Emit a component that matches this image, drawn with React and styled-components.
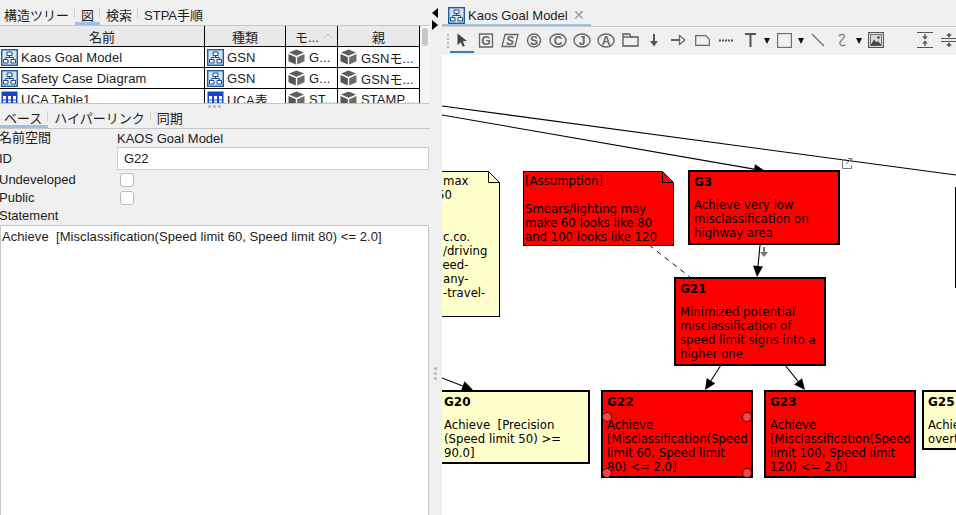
import React from 'react';
import styled, { createGlobalStyle } from 'styled-components';

const GlobalStyle = createGlobalStyle`
  html, body {
    margin: 0;
    padding: 0;
    height: 100%;
    overflow: hidden;
    background: #f0f0f0;
  }
  #root { height: 100%; }
`;

const UI_FONT = `"Liberation Sans", "Noto Sans CJK JP", sans-serif`;
const NODE_FONT = `"DejaVu Sans", "Noto Sans CJK JP", sans-serif`;

// the canvas starts here in page coordinates
const CANVAS_X = 442;
const CANVAS_Y = 55;

const Page = styled.div`
  display: flex;
  width: 956px;
  height: 515px;
  overflow: hidden;
  font-family: ${UI_FONT};
  font-size: 13px;
  color: #1c1c1c;
`;

const LeftPane = styled.div`
  display: flex;
  flex-direction: column;
  width: 430px;
  flex: none;
`;

const Divider = styled.div`
  width: 12px;
  flex: none;
  display: flex;
  flex-direction: column;
  padding-top: 8px;
  padding-left: 2px;
  box-sizing: border-box;
`;

const Triangle = styled.div`
  width: 0;
  height: 0;
  margin-bottom: 2px;
  border-top: 5px solid transparent;
  border-bottom: 5px solid transparent;
  border-left: ${(p) => (p.$dir === 'right' ? '6px solid #000' : 'none')};
  border-right: ${(p) => (p.$dir === 'left' ? '6px solid #000' : 'none')};
`;

const GripDots = styled.div`
  display: flex;
  flex-direction: column;
  gap: 2px;
  margin-top: 335px;
  margin-left: 2px;
  span {
    width: 3px;
    height: 3px;
    border-radius: 50%;
    background: #b4b4b4;
  }
`;

const RightPane = styled.div`
  flex: 1;
  min-width: 0;
  display: flex;
  flex-direction: column;
`;

const TabBar = styled.div`
  display: flex;
  height: 25px;
  flex: none;
  box-sizing: border-box;
  border-bottom: ${(p) => (p.$line ? '1px solid #c8c8c8' : 'none')};
`;

const Tab = styled.div`
  display: flex;
  align-items: center;
  padding: 6px 6px 0 ${(p) => (p.$first ? 4 : 6)}px;
  height: 100%;
  box-sizing: border-box;
  white-space: nowrap;
  position: relative;
  border-bottom: 3px solid ${(p) => (p.$active ? '#9fc0e4' : 'transparent')};
  &::after {
    content: '';
    position: absolute;
    right: 0;
    top: 7px;
    bottom: 4px;
    width: 1px;
    background: ${(p) => (p.$last ? 'transparent' : '#cfcfcf')};
  }
`;

const TableWrapper = styled.div`
  display: flex;
  height: 79px;
  width: 429px;
  flex: none;
  overflow: hidden;
  background: #f0f0f0;
  border-top: 1px solid #c4c4c4;
  border-bottom: 1px solid #c4c4c4;
  box-sizing: border-box;
`;

const ListTable = styled.table`
  width: 420px;
  flex: none;
  table-layout: fixed;
  border-collapse: separate;
  border-spacing: 0;
  background: #fff;
  align-self: flex-start;
  th {
    height: 21px;
    padding: 0;
    font-weight: 400;
    background: #e9e9e9;
    border-bottom: 1px solid #000;
    border-right: 1px solid #000;
    text-align: center;
    box-sizing: border-box;
  }
  td {
    height: 21px;
    padding: 0;
    background: #fff;
    border-bottom: 1px solid #000;
    border-right: 1px solid #000;
    box-sizing: border-box;
  }
`;

const HeaderInner = styled.div`
  display: flex;
  align-items: center;
  justify-content: space-between;
  padding: 0 4px 0 9px;
`;

const Cell = styled.div`
  display: flex;
  align-items: center;
  gap: ${(p) => p.$gap || 3}px;
  padding-left: ${(p) => p.$pad || 1}px;
  white-space: nowrap;
  overflow: hidden;
  letter-spacing: 0.1px;
`;

const ScrollTrack = styled.div`
  flex: 1;
  background: #f5f5f5;
  display: flex;
  justify-content: center;
  padding-top: 2px;
`;

const ScrollThumb = styled.div`
  width: 6px;
  height: 18px;
  border-radius: 3px;
  background: #c6c6c6;
`;

const SashDots = styled.div`
  height: 0;
  display: flex;
  justify-content: center;
  gap: 2px;
  width: 429px;
  position: relative;
  top: 1px;
  span {
    width: 3px;
    height: 3px;
    border-radius: 50%;
    background: #b4b4b4;
  }
`;

const Form = styled.div`
  display: grid;
  grid-template-columns: 117px 1fr;
  grid-template-rows: 18px 23px 19px 18px 18px;
  width: 429px;
  flex: none;
  align-items: center;
`;

const Label = styled.div`
  margin-left: -1px;
  line-height: 14px;
  white-space: nowrap;
  grid-column: ${(p) => (p.$wide ? '1 / -1' : 'auto')};
`;

const FieldText = styled.div`
  white-space: nowrap;
`;

const TextField = styled.div`
  height: 23px;
  box-sizing: border-box;
  background: #fff;
  border: 1px solid #cdcdcd;
  padding-left: 6px;
  display: flex;
  align-items: center;
`;

const Checkbox = styled.div`
  width: 14px;
  height: 14px;
  margin-left: 3px;
  box-sizing: border-box;
  background: #fff;
  border: 1px solid #b9b9b9;
  border-radius: 3px;
`;

const Statement = styled.div`
  flex: 1;
  width: 429px;
  box-sizing: border-box;
  background: #fff;
  border: 1px solid #c8c8c8;
  border-bottom: none;
  padding: 3px 1px;
  white-space: pre;
  letter-spacing: 0.06px;
`;

const EditorTabRow = styled.div`
  display: flex;
  height: 27px;
  flex: none;
  box-sizing: border-box;
  border-bottom: 1px solid #c8c8c8;
`;

const EditorTab = styled.div`
  display: flex;
  align-items: center;
  gap: 3px;
  width: 149px;
  height: 26px;
  box-sizing: border-box;
  padding: 6px 0 0 6px;
  border-bottom: 2px solid #9fc0e4;
  white-space: nowrap;
`;

const CloseMark = styled.span`
  color: #9a9a9a;
  font-size: 14px;
  margin-left: 2px;
`;

const Toolbar = styled.div`
  display: flex;
  height: 28px;
  flex: none;
  box-sizing: border-box;
  padding-left: 8px;
  overflow: hidden;
  position: relative;
`;

const ToolGrip = styled.div`
  position: absolute;
  left: 5px;
  top: 7px;
  bottom: 5px;
  width: 2px;
  background: repeating-linear-gradient(to bottom, #bbb 0 2px, transparent 2px 4px);
`;

const Tool = styled.div`
  width: 24px;
  height: 26px;
  flex: none;
  box-sizing: border-box;
  display: flex;
  align-items: center;
  justify-content: center;
  padding-top: 2px;
  border-bottom: 2px solid ${(p) => (p.$active ? '#3b7bbf' : 'transparent')};
  margin-right: ${(p) => p.$after || 0}px;
`;

const ToolCaret = styled.div`
  width: 10px;
  height: 26px;
  flex: none;
  display: flex;
  justify-content: center;
  padding-top: 11px;
  box-sizing: border-box;
  &::before {
    content: '';
    width: 0;
    height: 0;
    border-left: 3.5px solid transparent;
    border-right: 3.5px solid transparent;
    border-top: 6px solid #111;
  }
`;

const Canvas = styled.div`
  flex: 1;
  position: relative;
  overflow: hidden;
  background: #fff;
`;

const Wires = styled.svg`
  position: absolute;
  left: 0;
  top: 0;
  width: 514px;
  height: 460px;
`;

const Node = styled.div`
  position: absolute;
  left: ${(p) => p.$x - CANVAS_X}px;
  top: ${(p) => p.$y - CANVAS_Y}px;
  width: ${(p) => p.$w}px;
  height: ${(p) => p.$h}px;
  box-sizing: border-box;
  background: ${(p) => (p.$red ? '#ff0000' : '#ffffcc')};
  border: ${(p) => (p.$thin ? 1 : 2)}px solid #000;
  padding: ${(p) => (p.$thin ? '2px 1px' : '3px 4px')};
  font-family: ${NODE_FONT};
  font-size: 11.7px;
  line-height: 14px;
  color: #000;
  white-space: pre;
`;

const NodeTitle = styled.div`
  font-size: 12px;
  font-weight: 700;
  margin-bottom: 9px;
`;

const NodeLine = styled.div`
  min-height: 14px;
  margin-left: ${(p) => p.$indent || 0}px;
`;

const Fold = styled.svg`
  position: absolute;
  top: -1px;
  right: -1px;
  width: 12px;
  height: 12px;
`;

const Handle = styled.div`
  position: absolute;
  width: 10px;
  height: 10px;
  box-sizing: border-box;
  border-radius: 50%;
  background: #f04848;
  border: 1px solid #4a1010;
  left: ${(p) => (p.$right ? 139 : -1)}px;
  top: ${(p) => (p.$bottom ? 76 : 20)}px;
`;

const Ink = styled.g`
  fill: none;
  stroke: #555;
  stroke-width: 1.3;
`;

function DiagramIcon() {
  return (
    <svg width="17" height="17" viewBox="0 0 17 17">
      <rect x="0.7" y="0.7" width="15.6" height="15.6" fill="#d3e3f3" stroke="#1f5c9c" strokeWidth="1.4" />
      <path d="M6 3h5v3.5H6zM2.5 10.5h4.5V14H2.5zM10 10.5h4.5V14H10zM8.500 6.500v2M4.700 10.500v-2h7.600v2" fill="#f4f8fc" stroke="#1d4f86" />
    </svg>
  );
}

function TableIcon() {
  return (
    <svg width="17" height="17" viewBox="0 0 17 17">
      <rect x="0.5" y="0.5" width="16" height="16" fill="#1746c4" />
      <path d="M2 5h3v10H2zM7 5h3v10H7zM12 5h3v10h-3z" fill="#fff" />
      <path d="M2 9h3M7 9h3M12 9h3M2 12h3M7 12h3M12 12h3" stroke="#1746c4" />
    </svg>
  );
}

function CubeIcon() {
  return (
    <svg width="17" height="16" viewBox="0 0 17 16">
      <path d="M8.500 0.500 16 3.600 8.500 6.800 1 3.600z" fill="#5e5e5e" />
      <path d="M0.500 5 7.800 8.200V15.500L0.500 12.300z" fill="#565656" />
      <path d="M16.500 5 9.200 8.200V15.500L16.500 12.300z" fill="#6c6c6c" />
    </svg>
  );
}

function GlyphBox({ letter, slanted }) {
  return (
    <svg width="18" height="15" viewBox="0 0 18 15">
      <path d={slanted ? 'M4 1.500h13l-3 12H1z' : 'M2.500 1h13v13h-13z'} fill="none" stroke="#666" strokeWidth="1.3" />
      <text x="9" y="12" fontSize="12" fontWeight="700" textAnchor="middle" fill="#666" fontFamily="Liberation Sans" fontStyle={slanted ? 'italic' : 'normal'}>{letter}</text>
    </svg>
  );
}

function GlyphRound({ letter, wide }) {
  const rx = wide ? 8 : 6.5;
  return (
    <svg width="18" height="15" viewBox="0 0 18 15">
      <ellipse cx="9" cy="7.500" rx={rx} ry="6.500" fill="none" stroke="#666" strokeWidth="1.4" />
      <text x="9" y="12" fontSize="12" fontWeight="700" textAnchor="middle" fill="#666" fontFamily="Liberation Sans">{letter}</text>
    </svg>
  );
}

const toolIcons = {
  pointer: (
    <svg width="12" height="14" viewBox="0 0 12 14"><path d="M1.500 0.500 11 8 6.800 8.200 8.800 13 6.600 13.600 4.800 9.200 1.500 12z" fill="#444" /></svg>
  ),
  folder: (
    <svg width="17" height="14" viewBox="0 0 17 14"><Ink><path d="M1 13V1h6.500l1.500 3h7v9z" /><path d="M1 4h8" /></Ink></svg>
  ),
  down: (
    <svg width="10" height="13" viewBox="0 0 10 13"><path d="M5 0v11" stroke="#555" strokeWidth="2" /><path d="M1 7h8l-4 5.500z" fill="#555" /></svg>
  ),
  right: (
    <svg width="15" height="12" viewBox="0 0 15 12"><path d="M0 6h9" stroke="#666" strokeWidth="2" /><path d="M8.500 1.500 14 6l-5.500 4.500z" fill="none" stroke="#666" strokeWidth="1.2" /></svg>
  ),
  note: (
    <svg width="15" height="11" viewBox="0 0 15 11"><path d="M0.700 0.700h10l3.600 3.600v6H0.700z" fill="none" stroke="#666" strokeWidth="1.2" /></svg>
  ),
  dots: (
    <svg width="15" height="3" viewBox="0 0 15 3"><path d="M0 1.500h15" stroke="#555" strokeWidth="2" strokeDasharray="2 1" /></svg>
  ),
  text: (
    <svg width="11" height="14" viewBox="0 0 11 14"><path d="M0 1h11M5.500 1v13" stroke="#555" strokeWidth="2" fill="none" /></svg>
  ),
  rect: (
    <svg width="15" height="15" viewBox="0 0 15 15"><rect x="0.600" y="0.600" width="13.800" height="13.800" fill="none" stroke="#666" strokeWidth="1.1" /></svg>
  ),
  line: (
    <svg width="14" height="14" viewBox="0 0 14 14"><path d="M1 1l12 12" stroke="#666" strokeWidth="1.1" /></svg>
  ),
  squiggle: (
    <svg width="10" height="14" viewBox="0 0 10 14"><path d="M2 3.200C3 0.800 7.500 0.600 7.500 3.200 7.500 6 2.800 7 2.800 10 2.800 13 6.500 13.400 8.600 11.600" fill="none" stroke="#777" strokeWidth="1.2" /></svg>
  ),
  image: (
    <svg width="16" height="16" viewBox="0 0 16 16">
      <rect x="0.600" y="0.600" width="14.800" height="14.800" fill="#fff" stroke="#555" strokeWidth="1.2" />
      <rect x="2.500" y="2.500" width="11" height="11" fill="#d8d8d8" stroke="#555" strokeWidth="0.8" />
      <path d="M2.500 13.500 6 7.500l2.500 3 1.500-1.500 3.500 4.500z" fill="#444" />
      <circle cx="10.500" cy="5.500" r="1.300" fill="#444" />
    </svg>
  ),
  alignGrow: (
    <svg width="16" height="16" viewBox="0 0 16 16"><path d="M0 0.500h16M0 15.500h16" stroke="#555" /><path d="M8 2v3M8 11v3" stroke="#555" strokeWidth="1.5" /><path d="M5 4.500h6L8 7.500zM5 11.500h6L8 8.500z" fill="#555" /></svg>
  ),
  alignShrink: (
    <svg width="16" height="16" viewBox="0 0 16 16"><path d="M0 6.500h16M0 9.500h16" stroke="#555" /><path d="M8 1v2M8 13v2" stroke="#555" strokeWidth="1.5" /><path d="M5 2.500h6L8 5.500zM5 13.500h6L8 10.500z" fill="#555" /></svg>
  ),
};

const tools = [
  { icon: toolIcons.pointer, active: true },
  { icon: <GlyphBox letter="G" /> },
  { icon: <GlyphBox letter="S" slanted /> },
  { icon: <GlyphRound letter="S" /> },
  { icon: <GlyphRound letter="C" wide /> },
  { icon: <GlyphRound letter="J" wide /> },
  { icon: <GlyphRound letter="A" wide /> },
  { icon: toolIcons.folder },
  { icon: toolIcons.down },
  { icon: toolIcons.right },
  { icon: toolIcons.note },
  { icon: toolIcons.dots },
  { icon: toolIcons.text, caret: true },
  { icon: toolIcons.rect, caret: true },
  { icon: toolIcons.line },
  { icon: toolIcons.squiggle, caret: true },
  { icon: toolIcons.image, after: 25 },
  { icon: toolIcons.alignGrow },
  { icon: toolIcons.alignShrink },
];

const rows = [
  { name: 'Kaos Goal Model', icon: <DiagramIcon />, kind: 'GSN', model: 'G...', parent: 'GSNモ...' },
  { name: 'Safety Case Diagram', icon: <DiagramIcon />, kind: 'GSN', model: 'G...', parent: 'GSNモ...' },
  { name: 'UCA Table1', icon: <TableIcon />, kind: 'UCA表', model: 'ST...', parent: 'STAMP...' },
];

function Arrow({ x1, y1, x2, y2 }) {
  const len = Math.hypot(x2 - x1, y2 - y1);
  const ux = (x2 - x1) / len;
  const uy = (y2 - y1) / len;
  const bx = x2 - ux * 11;
  const by = y2 - uy * 11;
  const head = `${x2},${y2} ${bx - uy * 5},${by + ux * 5} ${bx + uy * 5},${by - ux * 5}`;
  return (
    <>
      <line x1={x1} y1={y1} x2={bx} y2={by} stroke="#000" strokeWidth="1.1" />
      <polygon points={head} fill="#000" />
    </>
  );
}

function FoldCorner({ fill }) {
  return (
    <Fold viewBox="0 0 12 12">
      <path d="M0 0H12V12z" fill="#fff" />
      <path d="M0.500 0.500V11.500H11.500z" fill={fill} stroke="#000" />
    </Fold>
  );
}

function GoalNode({ title, lines, children, ...rest }) {
  return (
    <Node {...rest}>
      <NodeTitle>{title}</NodeTitle>
      {lines.map((line, i) => (
        <NodeLine key={i}>{line}</NodeLine>
      ))}
      {children}
    </Node>
  );
}

const noteLines = [
  { text: 'max', indent: -1 },
  { text: '50', indent: -7 },
  { text: '' },
  { text: '' },
  { text: 'c.co.', indent: -1 },
  { text: '/driving', indent: -1 },
  { text: 'peed-', indent: -9 },
  { text: 'any-', indent: -1 },
  { text: '-travel-', indent: -1 },
];

export default function App() {
  return (
    <Page>
      <GlobalStyle />
      <LeftPane>
        <TabBar>
          <Tab $first>構造ツリー</Tab>
          <Tab $active>図</Tab>
          <Tab>検索</Tab>
          <Tab $last>STPA手順</Tab>
        </TabBar>
        <TableWrapper>
          <ListTable>
            <colgroup>
              <col style={{ width: 205 }} />
              <col style={{ width: 81 }} />
              <col style={{ width: 52 }} />
              <col style={{ width: 82 }} />
            </colgroup>
            <thead>
              <tr>
                <th>名前</th>
                <th>種類</th>
                <th>
                  <HeaderInner>
                    <span>モ...</span>
                    <svg width="10" height="6" viewBox="0 0 10 6">
                      <path d="M0.500 5.500 5 1l4.500 4.500" fill="none" stroke="#bbb" />
                    </svg>
                  </HeaderInner>
                </th>
                <th>親</th>
              </tr>
            </thead>
            <tbody>
              {rows.map((row) => (
                <tr key={row.name}>
                  <td><Cell>{row.icon}{row.name}</Cell></td>
                  <td><Cell $pad={2}>{row.icon}{row.kind}</Cell></td>
                  <td><Cell $pad={2} $gap={4}><CubeIcon />{row.model}</Cell></td>
                  <td><Cell $pad={2} $gap={4}><CubeIcon />{row.parent}</Cell></td>
                </tr>
              ))}
            </tbody>
          </ListTable>
          <ScrollTrack>
            <ScrollThumb />
          </ScrollTrack>
        </TableWrapper>
        <SashDots><span /><span /><span /></SashDots>
        <TabBar $line>
          <Tab $first $active>ベース</Tab>
          <Tab>ハイパーリンク</Tab>
          <Tab $last>同期</Tab>
        </TabBar>
        <Form>
          <Label>名前空間</Label>
          <FieldText>KAOS Goal Model</FieldText>
          <Label>ID</Label>
          <TextField>G22</TextField>
          <Label>Undeveloped</Label>
          <Checkbox />
          <Label>Public</Label>
          <Checkbox />
          <Label $wide>Statement</Label>
        </Form>
        <Statement>Achieve  [Misclassification(Speed limit 60, Speed limit 80) &lt;= 2.0]</Statement>
      </LeftPane>

      <Divider>
        <Triangle $dir="left" />
        <Triangle $dir="right" />
        <GripDots><span /><span /><span /></GripDots>
      </Divider>

      <RightPane>
        <EditorTabRow>
          <EditorTab>
            <DiagramIcon />
            Kaos Goal Model
            <CloseMark>✕</CloseMark>
          </EditorTab>
        </EditorTabRow>
        <Toolbar>
          <ToolGrip />
          {tools.map((tool, i) => (
            <React.Fragment key={i}>
              <Tool $active={tool.active} $after={tool.after}>{tool.icon}</Tool>
              {tool.caret && <ToolCaret />}
            </React.Fragment>
          ))}
        </Toolbar>
        <Canvas>
          <Wires viewBox={`${CANVAS_X} ${CANVAS_Y} 514 460`}>
            <line x1="442" y1="106" x2="956" y2="175" stroke="#000" strokeWidth="1.1" />
            <Arrow x1={442} y1={115} x2={765} y2={171} />
            <Arrow x1={760} y1={245} x2={757} y2={277} />
            <line x1="649" y1="245" x2="690" y2="277" stroke="#000" strokeDasharray="5 5" />
            <Arrow x1={721} y1={365} x2={705} y2={390} />
            <Arrow x1={785} y1={365} x2={805} y2={390} />
            <Arrow x1={442} y1={378} x2={473} y2={390} />
            <path d="M764 247v8" stroke="#777" strokeWidth="2" />
            <path d="M760 252h8l-4 5z" fill="#777" />
            <path d="M842.500 159.500v9h9v-3M846 159.500h-3.500M846 164l5-5M848 158.500h4v4" fill="none" stroke="#777" />
          </Wires>

          <Node $x={430} $y={171} $w={70} $h={146} $thin>
            {noteLines.map((line, i) => (
              <NodeLine key={i} $indent={12 + (line.indent || 0)}>{line.text}</NodeLine>
            ))}
            <FoldCorner fill="#ffffcc" />
          </Node>

          <Node $x={523} $y={171} $w={151} $h={75} $red $thin>
            <NodeLine>[Assumption]</NodeLine>
            <NodeLine />
            <NodeLine>Smears/lighting may</NodeLine>
            <NodeLine>make 60 looks like 80</NodeLine>
            <NodeLine>and 100 looks like 120</NodeLine>
            <FoldCorner fill="#ff0000" />
          </Node>

          <GoalNode $x={688} $y={170} $w={152} $h={75} $red title="G3"
            lines={['Achieve very low', 'misclassification on', 'highway area']} />

          <GoalNode $x={674} $y={277} $w={152} $h={89} $red title="G21"
            lines={['Minimized potential', 'misclassification of', 'speed limit signs into a', 'higher one']} />

          <GoalNode $x={438} $y={390} $w={152} $h={74} title="G20"
            lines={['Achieve  [Precision', '(Speed limit 50) >=', '90.0]']} />

          <GoalNode $x={601} $y={390} $w={152} $h={88} $red title="G22"
            lines={['Achieve', '[Misclassification(Speed', 'limit 60, Speed limit', '80) <= 2.0]']}>
            <Handle />
            <Handle $right />
            <Handle $bottom />
            <Handle $right $bottom />
          </GoalNode>

          <GoalNode $x={764} $y={390} $w={152} $h={88} $red title="G23"
            lines={['Achieve', '[Misclassification(Speed', 'limit 100, Speed limit', '120) <= 2.0]']} />

          <GoalNode $x={922} $y={390} $w={152} $h={60} title="G25"
            lines={['Achieve', 'overtravel']} />

          <Node $x={955} $y={187} $w={152} $h={101} />
        </Canvas>
      </RightPane>
    </Page>
  );
}
